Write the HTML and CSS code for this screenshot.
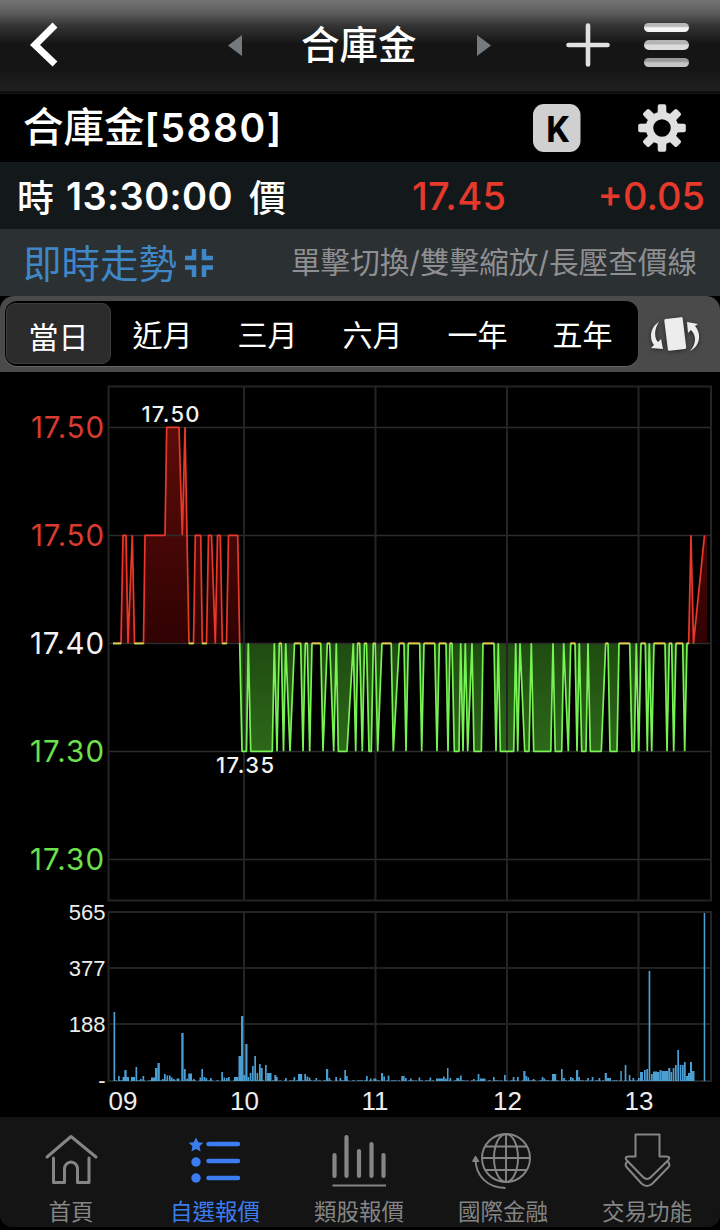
FILE: index.html
```html
<!DOCTYPE html>
<html lang="zh-TW">
<head>
    <meta charset="UTF-8">
    <meta name="viewport" content="width=device-width, initial-scale=1.0">
    <title>合庫金 5880</title>
    <link rel="stylesheet" href="styles.css">
</head>
<body>
    <header class="topbar">
        <svg class="back" width="28" height="46" viewBox="0 0 28 46"><path d="M25 3 5 23 25 42" fill="none" stroke="#fff" stroke-width="7"/></svg>
        <svg class="prev" width="14" height="21" viewBox="0 0 14 21"><path d="M14 0v21L0 10.5z" fill="#747b80"/></svg>
        <h1>合庫金</h1>
        <svg class="next" width="14" height="21" viewBox="0 0 14 21"><path d="M0 0v21l14-10.5z" fill="#747b80"/></svg>
        <svg class="plus" width="44" height="44" viewBox="0 0 44 44"><path d="M22 2.500v39M2.500 22h39" stroke="#e2e0e1" stroke-width="4.600" stroke-linecap="round"/></svg>
        <div class="menu"><i></i><i></i><i></i></div>
    </header>

    <section class="stock">
        <h2>合庫金<b>[5880]</b></h2>
        <svg class="k-btn" width="48" height="48" viewBox="0 0 48 48">
            <rect width="47.500" height="48" rx="11" fill="#d0d0d0"/>
            <text x="13" y="37.500" textLength="23" lengthAdjust="spacingAndGlyphs">K</text>
        </svg>
        <svg width="48" height="48" viewBox="-24 -24 48 48">
            <g id="gear" fill="#e0e0e0"></g>
            <circle r="12.500" fill="none" stroke="#e0e0e0" stroke-width="7.500"/>
        </svg>
    </section>

    <section class="quote">
        <span class="cjk">時</span>
        <b class="time">13:30:00</b>
        <span class="cjk">價</span>
        <span class="price">17.45</span>
        <span class="change">+0.05</span>
    </section>

    <section class="hint">
        <span class="trend">即時走勢</span>
        <svg width="28" height="28" viewBox="0 0 28 28"><path d="M0 9h9V0M19 0v9h9M0 18.500h9V28M28 18.500h-9V28" fill="none" stroke="#3f87c8" stroke-width="4.500"/></svg>
        <span class="tips">單擊切換/雙擊縮放/長壓查價線</span>
    </section>

    <section class="ranges">
        <div class="tabs">
            <span class="tab active">當日</span>
            <span class="tab">近月</span>
            <span class="tab">三月</span>
            <span class="tab">六月</span>
            <span class="tab">一年</span>
            <span class="tab">五年</span>
        </div>
        <svg class="rotate" width="52" height="40" viewBox="0 0 52 40">
            <rect x="16" y="4" width="18.500" height="32" rx="1.500" transform="rotate(-7 25 20)"/>
            <path d="M9 8C0 13-1 25 4 31l-3 3 12 1-2-10-3 3C4 24 4 15 9 8z"/>
            <path d="M40 37c10-5 12-17 5-25l3-2-11-2 1 11 3-3c6 6 5 15-1 21z"/>
        </svg>
    </section>

    <svg class="chart" width="720" height="745" viewBox="0 372 720 745">
        <defs>
            <linearGradient id="area" gradientUnits="userSpaceOnUse" x1="0" y1="427" x2="0" y2="751">
                <stop offset="0" stop-color="#5c0c08"/>
                <stop offset="0.667" stop-color="#300202"/>
                <stop offset="0.667" stop-color="#1f4b10"/>
                <stop offset="1" stop-color="#2d681a"/>
            </linearGradient>
            <linearGradient id="line" gradientUnits="userSpaceOnUse" x1="0" y1="427" x2="0" y2="751">
                <stop offset="0.667" stop-color="#e8382a"/>
                <stop offset="0.667" stop-color="#78f354"/>
            </linearGradient>
        </defs>
        <path id="price-area" fill="url(#area)"/>
        <path class="grid" d="M108 427.500H711M108 535.500H711M108 643.500H711M108 751.500H711M108 859.500H711M108 968H711M108 1024H711"/>
        <path class="grid frame" d="M108.500 386.500H711V900.500H108.500zM244 386V901M375.500 386V901M507 386V901M638.500 386V901M108.500 912H711V1081H108.500zM244 912V1081M375.500 912V1081M507 912V1081M638.500 912V1081"/>
        <path id="price-line" fill="none" stroke="url(#line)" stroke-width="1.700" stroke-linejoin="bevel"/>
        <path id="flat-line" stroke="#d9d04c" stroke-width="1.700"/>
        <g id="volume" fill="#4c9fd2"></g>
        <path d="M114 1080.500H694" stroke="#4c9fd2" stroke-width="1" stroke-dasharray="3 2 6 1 2 3" opacity="0.600"/>
        <g class="axis">
            <text class="up" x="31" y="438" textLength="73">17.50</text>
            <text class="up" x="31" y="546" textLength="73">17.50</text>
            <text class="flat" x="30" y="654" textLength="74">17.40</text>
            <text class="down" x="30" y="762" textLength="74">17.30</text>
            <text class="down" x="30" y="870" textLength="74">17.30</text>
        </g>
        <g class="mark">
            <text x="141.500" y="422" textLength="58">17.50</text>
            <text x="216" y="773" textLength="58">17.35</text>
        </g>
        <g class="vol-axis">
            <text x="105.500" y="920">565</text>
            <text x="105.500" y="976">377</text>
            <text x="105.500" y="1032">188</text>
            <text x="105.500" y="1088">-</text>
        </g>
        <g class="hours">
            <text x="123" y="1110">09</text>
            <text x="244.500" y="1110">10</text>
            <text x="375" y="1110">11</text>
            <text x="507.500" y="1110">12</text>
            <text x="639" y="1110">13</text>
        </g>
    </svg>

    <nav class="bottom">
        <div class="item">
            <svg width="60" height="60" viewBox="0 0 60 60"><path d="M6 30 30 9.500 55 30M12.500 31V55.500H23.500V42a6.500 7 0 0 1 13 0V55.500H48V31" fill="none" stroke="#858585" stroke-width="3" stroke-linecap="round" stroke-linejoin="round"/></svg>
            首頁
        </div>
        <div class="item active">
            <svg width="60" height="60" viewBox="0 0 60 60" fill="#3b7df0"><path d="m11 10.500 2.300 4.700 5 .6-3.700 3.500 1 5.200-4.600-2.500-4.600 2.500 1-5.200-3.700-3.500 5-.6z"/><circle cx="11" cy="35" r="4.700"/><circle cx="11" cy="51" r="4.700"/><path d="M23.500 17H53M23.500 34H53M23.500 51H53" stroke="#3b7df0" stroke-width="4.500" stroke-linecap="round"/></svg>
            自選報價
        </div>
        <div class="item">
            <svg width="60" height="60" viewBox="0 0 60 60"><path d="M5.500 28V49M17.500 10V49M30 24V49M42.500 17V49M54.500 28V49" stroke="#858585" stroke-width="4.200" stroke-linecap="round"/><path d="M3.500 58.500H57" stroke="#858585" stroke-width="2"/></svg>
            類股報價
        </div>
        <div class="item">
            <svg width="60" height="60" viewBox="0 0 60 60"><g fill="none" stroke="#858585" stroke-width="1.900"><circle cx="33" cy="31" r="24"/><ellipse cx="33" cy="31" rx="12" ry="24"/><path d="M33 7V55M9 31H57M12 19.500H54M12 43H54M2.500 32C2.500 49 15 61 32.500 61"/></g><path d="M-.5 34.500 2.500 29l3.500 5.500z" fill="#858585" stroke="#858585"/></svg>
            國際金融
        </div>
        <div class="item">
            <svg width="60" height="60" viewBox="0 0 60 60"><path d="M18.500 7.500H42.500V29.500H49C53 29.500 53 31.500 51 33.500L34 50Q30 54 26 50L10 33.500C8 31.500 8 29.500 12 29.500H18.500zM10.500 34C8 37 8 38.500 9.500 40L24.500 56.500Q30 61.500 35.500 56.500L51.500 40C53 38.500 53 37 50.500 34" fill="none" stroke="#858585" stroke-width="2" stroke-linejoin="round"/></svg>
            交易功能
        </div>
    </nav>

    <script>
        const svgNS = 'http://www.w3.org/2000/svg';

        // x position and price level around the reference price (0)
        const prices = [
            [113,0],[121,0],[123,1],[126,1],[128,0],[132.3,1],[134.5,0],[143.5,0],[145,1],[165,1],[166.7,2],[179,2],
            [182.3,1],[185,2],[189,0],[193.5,0],[195.3,1],[200.7,1],[202.3,0],[206.5,0],[208.5,1],[211.5,1],[215.3,0],
            [217.5,1],[220.3,1],[222.3,0],[226.5,0],[228.5,1],[237.7,1],[239.7,0],[242,-1],[246.5,-1],[248.3,0],
            [250.7,-1],[272.3,-1],[274.3,0],[277,-1],[279.3,0],[281.3,0],[283.5,-1],[285.7,0],[290,-1],[294.5,0],
            [300.7,0],[303,-1],[305.3,0],[307.3,0],[309.7,-1],[312,0],[320.7,0],[323,-1],[327.3,0],[329.7,0],
            [333.7,-1],[336.3,0],[338.3,-1],[347,-1],[353.3,0],[355.7,-1],[357.7,0],[359.7,0],[362.3,-1],[364.5,0],
            [366.5,0],[369,-1],[371.3,-1],[373.3,0],[375.3,0],[377.7,-1],[382,0],[391.2,0],[393.3,-1],[399.3,0],
            [404,0],[406,-1],[408.3,0],[419.7,0],[421.7,-1],[424,0],[434.7,0],[437,-1],[439.3,0],[446,0],[448,-1],
            [450,0],[452,0],[454.3,-1],[459,-1],[460.7,0],[463,-1],[465.3,0],[467.7,-1],[472,0],[474,-1],[481.3,-1],
            [483,0],[494,0],[496,-1],[498.3,0],[500.3,-1],[513.7,-1],[515.7,0],[517.7,-1],[520,0],[524.7,-1],
            [529,-1],[531.3,0],[533.7,-1],[550.8,-1],[553,0],[555.2,-1],[561.7,-1],[563.7,0],[568.3,-1],[570.7,0],
            [575,0],[577,-1],[579.3,0],[581.7,-1],[586,-1],[588,0],[590.3,-1],[601.3,-1],[605.7,0],[608,0],[610,-1],
            [617,-1],[619,0],[629.7,0],[632,-1],[634.3,-1],[636.3,0],[638.7,-1],[641,0],[645.3,0],[647.3,-1],
            [649.3,0],[651.7,-1],[654,0],[665,0],[667,-1],[669.3,0],[671.7,0],[673.7,-1],[676,0],[682.7,0],
            [684.7,-1],[687,0],[688.7,0],[691,1],[693.5,0],[704.5,1]
        ];
        const py = level => 643.3 - level * 108;
        const line = prices.map(p => p[0] + ' ' + py(p[1])).join('L');
        document.getElementById('price-line').setAttribute('d', 'M' + line);
        document.getElementById('price-area').setAttribute('d', 'M' + line + 'L707 535.3V643.3H113z');

        let flat = '';
        for (let i = 1; i < prices.length; i++) {
            if (prices[i][1] === 0 && prices[i - 1][1] === 0) {
                flat += 'M' + prices[i - 1][0] + ' 643.3H' + prices[i][0];
            }
        }
        document.getElementById('flat-line').setAttribute('d', flat);

        // x, height, optional width
        const volumes = [
            [113.5,69],[118,5],[122.5,4,6.5],[124.3,11,2.3],[131,4,4],[135.5,14],[140,2],[142.5,5],[151,3.5,5],
            [155,13,2.5],[157.5,18,2.3],[162,2],[164,7],[166.5,5.5],[169,5.5],[171,3.5],[173,2],[176.5,2.5,3],
            [181.3,48,2.3],[184,12],[186.3,2.5],[188.3,7.5,3.7],[193,2],[199.5,3.5],[201.3,12],[203.5,4],[205.5,3],
            [210,3],[221.3,9],[223.5,3.5],[226,3],[228,4],[234,4,4.5],[238.5,25,2.5],[241,65,2.3],[243.3,6,2],
            [245.3,37,2.2],[247.5,4],[249.7,8],[252,15],[254.3,25],[256.5,8],[259,17,1.7],[260.5,13,2.2],[265,16],
            [267,8,4.5],[274.3,6,2],[276,4],[285,3],[293.5,4],[298,7,4.2],[304.3,7],[306.5,4.5],[308.7,3.5],[315.5,3],
            [326,12,2.2],[328.5,3],[335.3,4],[339.5,3],[344.3,11],[346,5],[366,5],[370,2.5],[373.3,2.5,3],[381,8,2],
            [383.3,4.5],[387.7,5.5],[401.3,5,3.3],[405,3],[410,2.5],[418.5,3.5],[429.5,3.5],[436,2.5,7],[443,4.5],
            [445,2.5],[447,13,1.5],[449.5,3],[456.3,3,3],[460,5.5],[473,2],[477.7,7],[480,2.5,5.5],[493,4],[504,6],
            [512.7,4],[517,4],[523.3,10,2.2],[525.5,5],[527.5,3.5],[532.7,2],[541.7,4],[543.5,2.5],[552,7,4.2],
            [561,12],[563.3,3],[570,4],[572,3],[576,11,2.2],[578.3,4],[587.3,3],[591.7,4],[598.5,3],[604.7,8,2.2],
            [607,3,4],[620.3,10,1.5],[624.7,16],[628.7,6],[632.5,3],[638,3],[640,9,3],[644,11],[646.3,12],
            [648.6,110],[651,7],[653,9.5,4],[657,9,2.5],[659.5,11,2],[661.5,10,6.5],[668.2,13,2.2],[670.5,9,1.7],
            [672.7,13],[675,16],[677.3,31],[679.7,16],[682,16],[684,19],[686,5,2],[688,8,2],[690,19,2],[692,10,2.5],
            [703.7,168,1.5]
        ];
        const volume = document.getElementById('volume');
        volumes.forEach(([x, h, w = 1.7]) => {
            const bar = document.createElementNS(svgNS, 'rect');
            bar.setAttribute('x', x);
            bar.setAttribute('y', 1081 - h);
            bar.setAttribute('width', w);
            bar.setAttribute('height', h);
            volume.appendChild(bar);
        });

        // gear teeth
        for (let a = 0; a < 360; a += 45) {
            const tooth = document.createElementNS(svgNS, 'path');
            tooth.setAttribute('d', 'M-4.500-13-4.200-22Q-4-23.800-2.500-23.800H2.500Q4-23.800 4.200-22L4.500-13z');
            tooth.setAttribute('transform', 'rotate(' + a + ')');
            document.getElementById('gear').appendChild(tooth);
        }
    </script>
</body>
</html>
```
FILE: styles.css
```css
* {
    box-sizing: border-box;
}
body {
    margin: 0;
    width: 720px;
    height: 1230px;
    overflow: hidden;
    background-color: #000;
    color: #fff;
    font-family: Inter, "Noto Sans CJK TC", sans-serif;
    white-space: nowrap;
}
svg {
    display: block;
    flex: none;
}
h1, h2 {
    margin: 0;
    font-weight: 500;
}
.topbar {
    display: flex;
    align-items: center;
    height: 94px;
    padding: 0 32px 4px 30px;
    background: linear-gradient(#747474 0, #5c5c5c 13px, #333 26px, #151515 44px, #151515 70px, #202020 91px, #080808 92px, #181818 94px);
}
.prev {
    margin-left: 170px;
}
.topbar h1 {
    width: 116px;
    margin-left: 59px;
    font-size: 38.5px;
    line-height: 56px;
}
.next {
    margin-left: 60px;
}
.plus {
    margin-left: 75px;
}
.menu {
    display: flex;
    flex-direction: column;
    gap: 8px;
    margin-left: 34px;
}
.menu i {
    width: 45px;
    height: 9.5px;
    border-radius: 5px;
    background: linear-gradient(#b8b8b8 35%, #f4f4f4 55%);
}
.menu i:nth-child(2) {
    background: linear-gradient(#b4b4b4 35%, #dcdcdc 55%);
}
.menu i:nth-child(3) {
    background: linear-gradient(#999 35%, #c4c4c4 55%);
}
.stock {
    display: flex;
    align-items: center;
    height: 68px;
    padding: 2px 34px 2px 23px;
}
.stock h2 {
    width: 510px;
    font-size: 40.5px;
    line-height: 60px;
}
.stock b {
    font-size: 39px;
    font-weight: 600;
    letter-spacing: 1.5px;
}
.k-btn {
    margin-right: 57px;
    font: bold 37px Roboto, sans-serif;
}
.quote {
    display: flex;
    align-items: center;
    height: 67px;
    padding: 1px 15px 0 17px;
    background-color: #13181b;
    font-size: 38px;
}
.quote .cjk {
    width: 37px;
    font-size: 37px;
    font-weight: 500;
}
.time {
    width: 195px;
    padding-left: 12px;
    font-weight: 600;
    letter-spacing: 0.4px;
}
.price {
    margin-left: 126px;
    letter-spacing: 0.3px;
}
.price, .change {
    color: #e5392b;
    font-weight: 500;
}
.change {
    margin-left: auto;
}
.hint {
    display: flex;
    align-items: center;
    height: 67px;
    padding: 0 23px;
    background-color: #2b3033;
}
.trend {
    width: 162px;
    padding-bottom: 4px;
    color: #3f87c8;
    font-size: 38.5px;
}
.tips {
    margin-left: auto;
    padding-bottom: 4px;
    color: #8f8f92;
    font-size: 29.6px;
}
.ranges {
    display: flex;
    align-items: center;
    height: 76px;
    border-radius: 14px 14px 0 0;
    background-color: #4a4a4a;
}
.tabs {
    display: flex;
    width: 633px;
    height: 65px;
    margin: 0 12px 1px 5px;
    padding: 2px 1px;
    border-radius: 12px;
    background-color: #000;
    box-shadow: 0 1px 1px #666;
}
.tab {
    width: 105px;
    height: 61px;
    padding-right: 2px;
    font-size: 30px;
    line-height: 64px;
    text-align: center;
}
.tab.active {
    padding-right: 0;
    border: 1px solid #3c3c3c;
    border-radius: 9px;
    background-color: #2c2c2c;
    line-height: 66px;
}
.rotate {
    fill: #ededed;
    filter: drop-shadow(0 1px 2px #222);
}
.grid {
    fill: none;
    stroke: #2c2c2c;
    stroke-width: 1.3;
}
.frame {
    stroke: #242424;
    stroke-width: 2;
}
.axis {
    font-size: 29.5px;
}
.up {
    fill: #d83b30;
}
.flat {
    fill: #f2f2f2;
}
.down {
    fill: #6ee04c;
}
.mark {
    fill: #f2f2f2;
    font-size: 22px;
    font-weight: 500;
}
.vol-axis, .hours {
    fill: #ededed;
    font-family: "Liberation Sans", Arial, sans-serif;
    font-size: 22px;
    text-anchor: end;
}
.hours {
    font-size: 26px;
    text-anchor: middle;
}
.bottom {
    display: flex;
    height: 110px;
    border-radius: 0 0 12px 12px;
    background-color: #141414;
}
.item {
    display: flex;
    flex-direction: column;
    align-items: center;
    width: 144px;
    padding: 10px 2px 0 0;
    color: #858585;
    font-size: 22.5px;
    line-height: 32px;
}
.item svg {
    margin-bottom: 9px;
    overflow: visible;
}
.item.active {
    color: #3b7df0;
}
```
